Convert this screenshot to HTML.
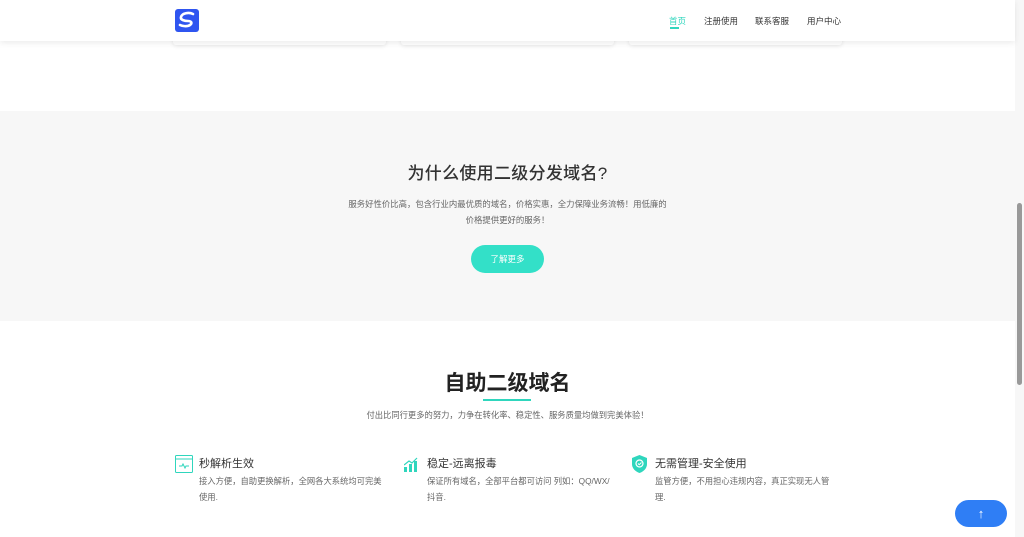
<!DOCTYPE html>
<html><head><meta charset="utf-8"><style>
*{margin:0;padding:0;box-sizing:border-box}
body{width:1024px;height:537px;overflow:hidden;background:#fff;font-family:"Liberation Sans","Noto Sans CJK SC",sans-serif;position:relative}
.hdr{position:absolute;left:0;top:0;width:1015px;height:41px;background:#fff;box-shadow:0 2px 6px rgba(0,0,0,.08);z-index:2}
.card{position:absolute;top:30px;height:15px;background:#fff;border-radius:3px;box-shadow:0 1px 4px rgba(0,0,0,.1)}
.nav{position:absolute;top:15px;font-size:8.5px;color:#333}
.gray{position:absolute;left:0;top:111px;width:1015px;height:210px;background:#f7f7f7}
.c{position:absolute;left:0;width:1015px;text-align:center}
.ft{position:absolute;font-size:11px;color:#333}
.fd{position:absolute;font-size:8.3px;color:#666;line-height:16px;width:190px}
.sb{position:absolute;left:1015px;top:0;width:9px;height:537px;background:#f7f7f7}
.th{position:absolute;left:1017px;top:203px;width:5px;height:182px;background:#999;border-radius:3px}
</style></head><body>
<div class="card" style="left:173px;width:213px"></div>
<div class="card" style="left:401px;width:213px"></div>
<div class="card" style="left:629px;width:213px"></div>
<div class="hdr">
<svg style="position:absolute;left:175px;top:9px" width="24" height="23" viewBox="0 0 24 23"><rect width="24" height="23" rx="3" fill="#2f55f0"/><path d="M18 5C14 3 7 4 6 8c-1 3 4 4 7 4s5 2 2 4c-3 2-8 1-10 0" stroke="#fff" stroke-width="2.6" fill="none" stroke-linecap="round"/></svg>
<div class="nav" style="left:669px;color:#2fd6bd">首页</div>
<div style="position:absolute;left:670px;top:27px;width:9px;height:2px;background:#2fd6bd"></div>
<div class="nav" style="left:704px">注册使用</div>
<div class="nav" style="left:755px">联系客服</div>
<div class="nav" style="left:807px">用户中心</div>
</div>
<div class="gray"></div>
<div class="c" style="top:159px;font-size:17px;color:#333;font-weight:500;letter-spacing:0.3px">为什么使用二级分发域名?</div>
<div class="c" style="top:196px;font-size:8.4px;color:#666;line-height:16px">服务好性价比高，包含行业内最优质的域名，价格实惠，全力保障业务流畅！用低廉的<br>价格提供更好的服务！</div>
<div style="position:absolute;left:471px;top:245px;width:73px;height:28px;border-radius:14px;background:#33e0c8;color:#fff;font-size:8.5px;line-height:28px;text-align:center">了解更多</div>
<div class="c" style="top:367px;font-size:21px;color:#222;font-weight:bold">自助二级域名</div>
<div style="position:absolute;left:483px;top:399px;width:48px;height:2px;background:#2fd6bd"></div>
<div class="c" style="top:409px;font-size:8.3px;color:#666">付出比同行更多的努力，力争在转化率、稳定性、服务质量均做到完美体验！</div>
<svg style="position:absolute;left:175px;top:455px" width="18" height="18" viewBox="0 0 18 18" fill="none" stroke="#2fd6bd" stroke-width="1"><rect x="0.5" y="0.5" width="17" height="17" rx="1"/><line x1="0.5" y1="4" x2="17.5" y2="4"/><path d="M4 11h3l1-2 2 4 1-2h3"/></svg>
<div class="ft" style="left:199px;top:455px">秒解析生效</div>
<div class="fd" style="left:199px;top:473px">接入方便，自助更换解析，全网各大系统均可完美使用.</div>
<svg style="position:absolute;left:404px;top:456px" width="14" height="16" viewBox="0 0 14 16" fill="#2fd6bd"><rect x="0" y="11" width="3" height="5"/><rect x="5" y="8" width="3" height="8"/><rect x="10" y="5" width="3" height="11"/><path d="M0 9l5-4 3 2 5-5" stroke="#2fd6bd" fill="none" stroke-width="1.2"/></svg>
<div class="ft" style="left:427px;top:455px">稳定-远离报毒</div>
<div class="fd" style="left:427px;top:473px">保证所有域名，全部平台都可访问 列如：QQ/WX/抖音.</div>
<svg style="position:absolute;left:632px;top:455px" width="15" height="18" viewBox="0 0 15 18"><path d="M7.5 0L15 3v6c0 4-3 7.5-7.5 9C3 16.5 0 13 0 9V3z" fill="#2fd6bd"/><circle cx="7.5" cy="8.5" r="3.5" fill="none" stroke="#fff" stroke-width="1.2"/><path d="M6 8.5l1.2 1.2L9.5 7.5" stroke="#fff" fill="none" stroke-width="1"/></svg>
<div class="ft" style="left:655px;top:455px">无需管理-安全使用</div>
<div class="fd" style="left:655px;top:473px;width:180px">监管方便，不用担心违规内容，真正实现无人管理.</div>
<div style="position:absolute;left:955px;top:500px;width:52px;height:27px;border-radius:14px;background:#2f7ef5;color:#fff;text-align:center;line-height:27px;font-size:13px">↑</div>
<div class="sb"></div><div class="th"></div>
</body></html>
